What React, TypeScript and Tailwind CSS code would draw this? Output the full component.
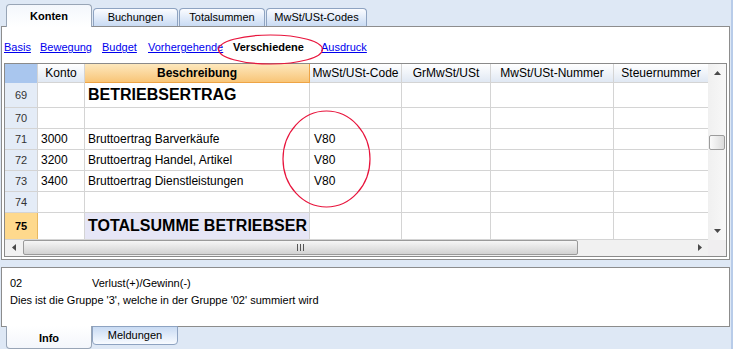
import type { ReactNode } from 'react'

const COLS = [33, 47, 225, 92, 89, 123, 94]

type Row = {
  n: string
  konto?: string
  text?: string
  code?: string
  big?: boolean
  h: string
  current?: boolean
}

const ROWS: Row[] = [
  { n: '69', text: 'BETRIEBSERTRAG', big: true, h: 'h-[25px]' },
  { n: '70', h: 'h-[21px]' },
  { n: '71', konto: '3000', text: 'Bruttoertrag Barverkäufe', code: 'V80', h: 'h-[21px]' },
  { n: '72', konto: '3200', text: 'Bruttoertrag Handel, Artikel', code: 'V80', h: 'h-[21px]' },
  { n: '73', konto: '3400', text: 'Bruttoertrag Dienstleistungen', code: 'V80', h: 'h-[21px]' },
  { n: '74', h: 'h-[21px]' },
  { n: '75', text: 'TOTALSUMME BETRIEBSER', big: true, h: 'h-[27px]', current: true },
]

function TopTab({ label, w, active }: { label: string; w: string; active?: boolean }) {
  if (active) {
    return (
      <div
        className={`${w} relative z-10 -mb-px flex h-[23px] items-center justify-center rounded-t-[4px] border border-b-0 border-[#98a5b6] bg-gradient-to-b from-[#f4f7fc] to-white text-[11px] font-bold text-black`}
      >
        {label}
      </div>
    )
  }
  return (
    <div
      className={`${w} ml-px flex h-[18px] items-center justify-center rounded-t-[4px] border border-b-0 border-[#8ea3c1] bg-gradient-to-b from-[#fbfcff] to-[#c9dbf3] text-[11px] text-black`}
    >
      {label}
    </div>
  )
}

function Cell({
  w,
  className = '',
  children,
}: {
  w: number
  className?: string
  children?: ReactNode
}) {
  return (
    <div
      style={{ width: w }}
      className={`flex shrink-0 items-center overflow-hidden whitespace-nowrap border-r border-[#d4d4d4] ${className}`}
    >
      {children}
    </div>
  )
}

function Arrow({ dir }: { dir: 'up' | 'down' | 'left' | 'right' }) {
  const pts = {
    up: '0,4 3.5,0 7,4',
    down: '0,0 3.5,4 7,0',
    left: '4,0 0,3.5 4,7',
    right: '0,0 4,3.5 0,7',
  }[dir]
  const vert = dir === 'up' || dir === 'down'
  return (
    <svg width={vert ? 7 : 4} height={vert ? 4 : 7} className="block">
      <polygon points={pts} fill="#4a4a4a" />
    </svg>
  )
}

export default function App() {
  return (
    <div className="relative flex h-[349px] w-[733px] overflow-hidden bg-[#dee8f5] font-['Liberation_Sans',Arial,sans-serif] text-black">
      <div className="flex w-[731px] flex-col">
        {/* obere Tabs */}
        <div className="flex h-[26px] items-end pl-[6px]">
          <TopTab label="Konten" w="w-[86px]" active />
          <TopTab label="Buchungen" w="w-[85px]" />
          <TopTab label="Totalsummen" w="w-[86px]" />
          <TopTab label="MwSt/USt-Codes" w="w-[101px]" />
        </div>

        {/* Hauptbereich */}
        <div className="ml-px flex h-[235px] w-[729px] flex-col border border-[#8d8d8d] bg-white">
          <div className="flex h-[36px] items-center pl-[2px] pt-[5px] text-[11px]">
            <span className="w-[36px] text-[#0000ee] underline">Basis</span>
            <span className="w-[62px] text-[#0000ee] underline">Bewegung</span>
            <span className="w-[46px] text-[#0000ee] underline">Budget</span>
            <span className="w-[85px] text-[#0000ee] underline">Vorhergehende</span>
            <span className="w-[88px] font-bold">Verschiedene</span>
            <span className="text-[#0000ee] underline">Ausdruck</span>
          </div>

          <div className="ml-[2px] flex h-[194px] w-[723px] flex-col border border-[#8a8a8a]">
            <div className="flex h-[176px]">
              <div className="flex w-[703px] flex-col">
                {/* Kopfzeile */}
                <div className="flex h-[19px] text-[12px]">
                  <Cell w={COLS[0]} className="border-[#9db3cf] bg-[#a9c6ee]" />
                  <Cell
                    w={COLS[1]}
                    className="justify-center border-b border-[#9db3cf] bg-gradient-to-b from-white to-[#e0e8f3]"
                  >
                    Konto
                  </Cell>
                  <Cell
                    w={COLS[2]}
                    className="justify-center border-b border-[#eea445] bg-gradient-to-b from-[#fde8bd] to-[#f8c577] font-bold"
                  >
                    Beschreibung
                  </Cell>
                  <Cell
                    w={COLS[3]}
                    className="justify-center border-b border-[#9db3cf] bg-gradient-to-b from-white to-[#e0e8f3]"
                  >
                    MwSt/USt-Code
                  </Cell>
                  <Cell
                    w={COLS[4]}
                    className="justify-center border-b border-[#9db3cf] bg-gradient-to-b from-white to-[#e0e8f3]"
                  >
                    GrMwSt/USt
                  </Cell>
                  <Cell
                    w={COLS[5]}
                    className="justify-center border-b border-[#9db3cf] bg-gradient-to-b from-white to-[#e0e8f3]"
                  >
                    MwSt/USt-Nummer
                  </Cell>
                  <Cell
                    w={COLS[6]}
                    className="justify-center border-b border-r-0 border-[#9db3cf] bg-gradient-to-b from-white to-[#e0e8f3]"
                  >
                    Steuernummer
                  </Cell>
                </div>

                {ROWS.map((r) => (
                  <div key={r.n} className={`flex ${r.h} border-b border-[#d4d4d4] text-[12px]`}>
                    <Cell
                      w={COLS[0]}
                      className={`justify-center text-[11px] ${
                        r.current
                          ? 'border-[#e8b860] bg-[#fed98d] font-bold'
                          : 'border-[#c9d5e6] bg-[#e4ecf7] text-[#333]'
                      }`}
                    >
                      {r.n}
                    </Cell>
                    <Cell w={COLS[1]} className="pl-[3px]">
                      {r.konto}
                    </Cell>
                    <Cell
                      w={COLS[2]}
                      className={`pl-[3px] ${r.big ? 'text-[16px] font-bold' : ''} ${
                        r.current ? 'bg-[#e6e6f6]' : ''
                      }`}
                    >
                      {r.text}
                    </Cell>
                    <Cell w={COLS[3]} className="pl-[4px]">
                      {r.code}
                    </Cell>
                    <Cell w={COLS[4]} />
                    <Cell w={COLS[5]} />
                    <Cell w={COLS[6]} className="border-r-0" />
                  </div>
                ))}
              </div>

              {/* vertikale Bildlaufleiste */}
              <div className="flex w-[18px] flex-col items-center bg-gradient-to-r from-[#f0f0f0] to-[#f8f8f8]">
                <div className="flex h-[18px] items-center">
                  <Arrow dir="up" />
                </div>
                <div className="mt-[53px] h-[15px] w-[16px] rounded-[2px] border border-[#9c9c9c] bg-gradient-to-r from-[#fafafa] to-[#dcdcdc]" />
                <div className="flex-1" />
                <div className="flex h-[18px] items-center">
                  <Arrow dir="down" />
                </div>
              </div>
            </div>

            {/* horizontale Bildlaufleiste */}
            <div className="flex h-[16px]">
              <div className="flex w-[703px] items-center bg-[#f1f1f1]">
                <div className="flex w-[18px] justify-center">
                  <Arrow dir="left" />
                </div>
                <div className="flex h-[15px] w-[555px] items-center justify-center gap-[2px] rounded-[2px] border border-[#9a9a9a] bg-gradient-to-b from-[#f6f6f6] to-[#d2d2d2]">
                  <span className="h-[7px] w-px bg-[#555]" />
                  <span className="h-[7px] w-px bg-[#555]" />
                  <span className="h-[7px] w-px bg-[#555]" />
                </div>
                <div className="flex-1" />
                <div className="flex w-[16px] justify-center">
                  <Arrow dir="right" />
                </div>
              </div>
              <div className="w-[18px] bg-[#f0eef0]" />
            </div>
          </div>
        </div>

        {/* Info-Bereich */}
        <div className="mt-[7px] ml-px flex h-[60px] w-[729px] flex-col border border-[#8c8c8c] bg-white pl-[8px] pt-[7px] text-[11px] leading-[17px]">
          <div className="flex">
            <span className="w-[82px]">02</span>
            <span>Verlust(+)/Gewinn(-)</span>
          </div>
          <div>Dies ist die Gruppe '3', welche in der Gruppe '02' summiert wird</div>
        </div>

        {/* untere Tabs */}
        <div className="-mt-px flex items-start pl-[6px]">
          <div className="relative z-10 flex h-[23px] w-[86px] items-center justify-center rounded-b-[4px] border border-t-0 border-[#98a5b6] bg-gradient-to-b from-white to-[#f3f6fb] pt-[3px] text-[11px] font-bold">
            Info
          </div>
          <div className="flex h-[19px] w-[86px] items-center justify-center rounded-b-[4px] border border-[#8ea3c1] bg-gradient-to-b from-[#c9dbf3] to-[#f8fbff] text-[11px]">
            Meldungen
          </div>
        </div>
      </div>
      <div className="w-[2px] bg-[#b8cce9]" />

      {/* rote Markierungen */}
      <svg
        width={733}
        height={349}
        className="pointer-events-none absolute left-0 top-0"
      >
        <ellipse cx={270.5} cy={49.5} rx={52} ry={14.5} fill="none" stroke="#e8143c" strokeWidth={1.2} />
        <ellipse cx={326.5} cy={159} rx={43.5} ry={48} fill="none" stroke="#e8143c" strokeWidth={1.2} />
      </svg>
    </div>
  )
}
